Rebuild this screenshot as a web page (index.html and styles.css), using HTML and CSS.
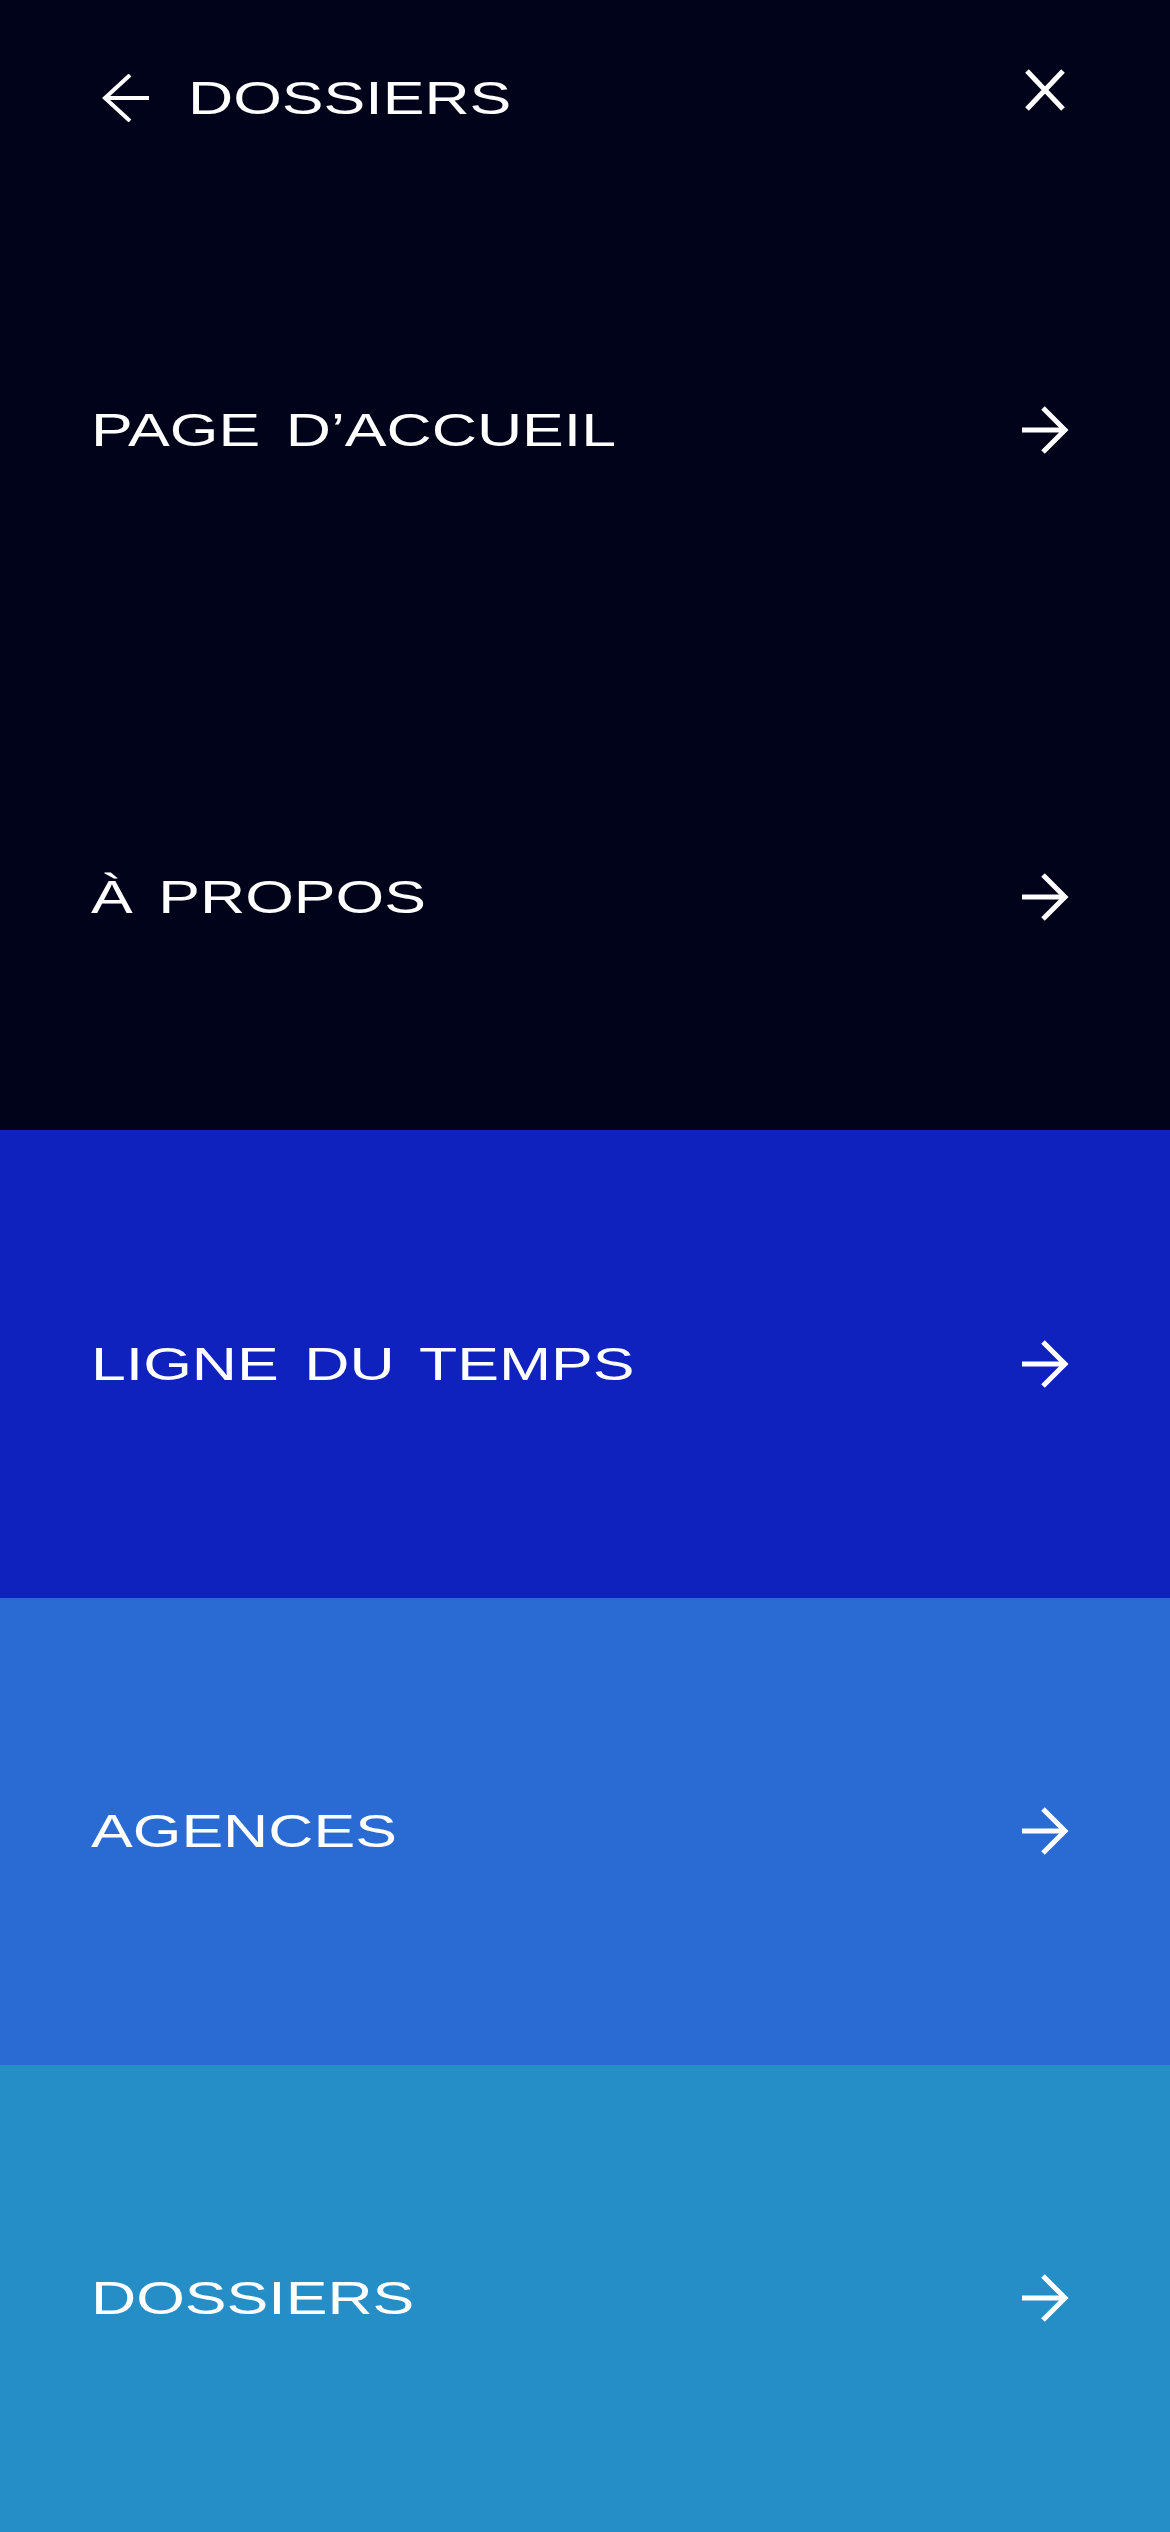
FILE: index.html
```html
<!DOCTYPE html>
<html lang="fr">
<head>
    <meta charset="UTF-8">
    <title>Menu</title>
    <link rel="stylesheet" href="styles.css">
</head>
<body>
    <nav class="menu">
        <!-- Top bar -->
        <header class="menu-header">
            <a class="back" href="#">
                <svg class="back-icon" viewBox="0 0 48 48" width="48" height="48">
                    <path d="M3 24 H47" />
                    <path d="M28 1 L3 24 L28 47" />
                </svg>
                <span class="label">DOSSIERS</span>
            </a>
            <a class="close" href="#">
                <svg viewBox="0 0 40 42" width="40" height="42">
                    <path d="M2 2 L38 40 M38 2 L2 40" />
                </svg>
            </a>
        </header>

        <!-- Menu entries -->
        <a class="menu-item item-dark" href="#">
            <span class="label">PAGE D’ACCUEIL</span>
            <svg class="arrow" viewBox="0 0 48 48" width="48" height="48">
                <path d="M0 24 H44" />
                <path d="M21 2 L43 24 L21 46" />
            </svg>
        </a>
        <a class="menu-item item-dark" href="#">
            <span class="label">À PROPOS</span>
            <svg class="arrow" viewBox="0 0 48 48" width="48" height="48">
                <path d="M0 24 H44" />
                <path d="M21 2 L43 24 L21 46" />
            </svg>
        </a>
        <a class="menu-item item-blue" href="#">
            <span class="label">LIGNE DU TEMPS</span>
            <svg class="arrow" viewBox="0 0 48 48" width="48" height="48">
                <path d="M0 24 H44" />
                <path d="M21 2 L43 24 L21 46" />
            </svg>
        </a>
        <a class="menu-item item-mid" href="#">
            <span class="label">AGENCES</span>
            <svg class="arrow" viewBox="0 0 48 48" width="48" height="48">
                <path d="M0 24 H44" />
                <path d="M21 2 L43 24 L21 46" />
            </svg>
        </a>
        <a class="menu-item item-light" href="#">
            <span class="label">DOSSIERS</span>
            <svg class="arrow" viewBox="0 0 48 48" width="48" height="48">
                <path d="M0 24 H44" />
                <path d="M21 2 L43 24 L21 46" />
            </svg>
        </a>
    </nav>
</body>
</html>
```

FILE: styles.css
```css
:root {
    --dark: #00031a;
    --blue: #1022be;
    --mid: #2a6bd3;
    --light: #268ec7;
}

html, body {
    margin: 0;
    padding: 0;
}

body {
    font-family: "Liberation Sans", Arial, sans-serif;
    color: #fff;
    background-color: var(--dark);
}

a {
    color: inherit;
    text-decoration: none;
}

svg path {
    fill: none;
    stroke: #fff;
}

.menu {
    display: flex;
    flex-direction: column;
    min-height: 100vh;
}

.menu-header {
    flex: 0 0 196px;
    box-sizing: border-box;
    display: flex;
    justify-content: space-between;
    align-items: flex-start;
    padding: 69px 105px 0 102px;
    background-color: var(--dark);
}

.back {
    display: flex;
    align-items: center;
    gap: 38px;
    margin-top: 5px;
}

.back-icon path {
    stroke-width: 4;
}

.close {
    display: block;
    height: 42px;
}

.close svg {
    display: block;
}

.close path {
    stroke-width: 5;
}

/* the wide display face is approximated by stretching the text */
.label {
    display: inline-block;
    font-size: 46px;
    line-height: 48px;
    word-spacing: 6px;
    white-space: nowrap;
    transform: scaleX(1.36);
    transform-origin: left center;
}

.menu-item {
    flex: 1 1 0;
    display: flex;
    justify-content: space-between;
    align-items: center;
    padding: 0 100px 0 91px;
}

.arrow {
    display: block;
    flex: none;
}

.arrow path {
    stroke-width: 5;
}

.item-dark {
    background-color: var(--dark);
}

.item-blue {
    background-color: var(--blue);
}

.item-mid {
    background-color: var(--mid);
}

.item-light {
    background-color: var(--light);
}
```
